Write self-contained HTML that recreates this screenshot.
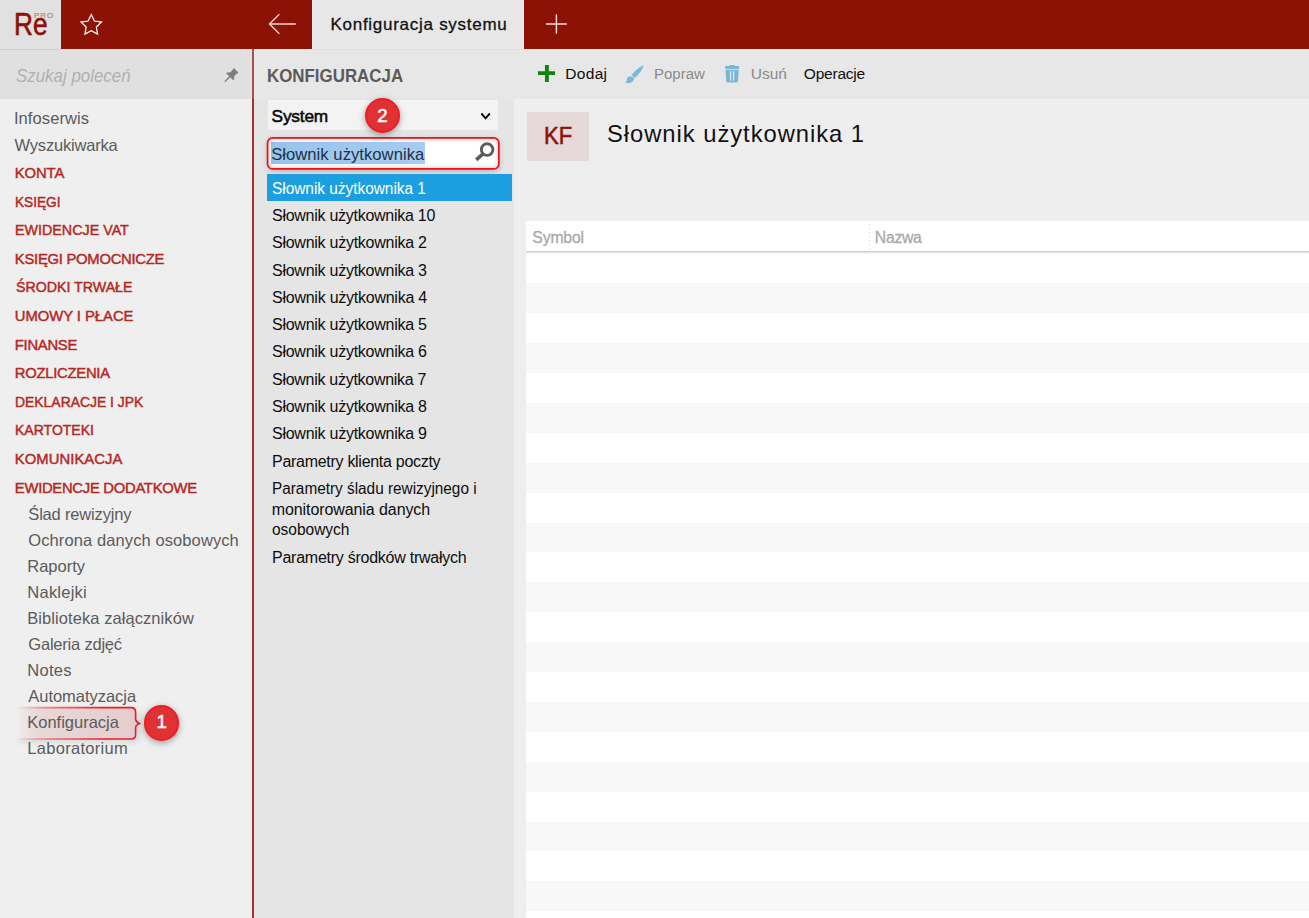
<!DOCTYPE html>
<html lang="pl">
<head>
<meta charset="utf-8">
<title>Konfiguracja systemu</title>
<style>
html,body{margin:0;padding:0;}
body{width:1309px;height:918px;overflow:hidden;position:relative;background:#eeeeee;font-family:"Liberation Sans",sans-serif;}
.a{position:absolute;}
.t{position:absolute;line-height:0;height:0;white-space:pre;transform-origin:0 50%;margin-top:-0.3465em;}
svg{position:absolute;overflow:visible;}
/* regions */
#topbar{left:0;top:0;width:1309px;height:49px;background:#8c1206;}
#topline{left:0;top:49px;width:61px;height:1px;background:#dccaca;}
#topline2{left:312px;top:49px;width:212px;height:1px;background:#e3dcda;}
#logo{left:0;top:0;width:61px;height:49px;background:#e1e1e1;}
#tab{left:312px;top:0;width:212px;height:49px;background:#e7e7e7;}
#side{left:0;top:49px;width:252px;height:869px;background:#efefef;}
#sidesearch{left:0;top:49px;width:252px;height:50px;background:#e0e0e0;}
#vline{left:252px;top:49px;width:2px;height:50px;background:#a9524a;}
#vline2{left:252px;top:99px;width:2px;height:820px;background:#a1352b;}
#mid{left:254px;top:49px;width:259.6px;height:869px;background:#e5e5e5;}
#midhead{left:254px;top:49px;width:259.6px;height:50px;background:#e7e7e7;}
#toolbar{left:513px;top:49px;width:796px;height:49.6px;background:#e7e7e7;}
#select{left:268px;top:100.3px;width:230px;height:29.6px;background:#f3f3f3;}
#search{left:267.5px;top:137.9px;width:231.4px;height:31.1px;border-radius:5px;background:#fff;box-shadow:0 2px 6px rgba(0,0,0,.24);}
#searchglow{left:267.5px;top:137.9px;width:231.4px;height:31.1px;border-radius:5px;box-shadow:inset 0 0 5px 1px rgba(0,0,0,.22);}
#sel{left:270.7px;top:142.4px;width:154.3px;height:21.4px;background:linear-gradient(90deg,#98c3ea,#a6cdf0);}
#active{left:266.5px;top:174.4px;width:245.5px;height:26.8px;background:#1c9fe0;}
#kf{left:526.9px;top:111.9px;width:61.9px;height:48.9px;background:#e6d9d9;}
#thead{left:526px;top:221.2px;width:783px;height:30px;background:#fff;}
#theadline{left:526px;top:251.2px;width:783px;height:2.2px;background:linear-gradient(180deg,#c9c9c9 0,#d4d4d4 45%,#efefef 100%);}
#colsep{left:869px;top:224px;width:1px;height:26px;background:repeating-linear-gradient(180deg,#d6d6d6 0,#d6d6d6 1px,transparent 1px,transparent 4px);}
#rows{left:526px;top:253px;width:783px;height:665px;background:repeating-linear-gradient(180deg,#f8f8f8 0,#f8f8f8 0.5px,#fff 0.5px,#fff 30.4px,#f8f8f8 30.4px,#f8f8f8 59.8px);}
#rowgap{left:526px;top:252px;width:783px;height:1.4px;background:#f4f4f4;}
.badge{width:31.5px;height:31.5px;border-radius:50%;background:#e03135;border:2px solid #f01c24;box-shadow:0 2px 6px rgba(0,0,0,.35);}
#b1{left:143.5px;top:705px;}
#b2{left:364.8px;top:97.5px;}
#cfg{left:16px;top:707.6px;width:119.6px;height:31.4px;background:linear-gradient(90deg,rgba(225,190,190,0) 0,rgba(228,200,200,.6) 18%,rgba(226,196,196,.8) 100%);border-radius:0 6px 6px 0;box-shadow:4px 3px 6px rgba(0,0,0,.10);}
</style>
</head>
<body>
<div class="a" id="topbar"></div>

<div class="a" id="logo"></div>
<div class="a" id="tab"></div>
<div class="a" id="side"></div>
<div class="a" id="sidesearch"></div>
<div class="a" id="mid"></div>
<div class="a" id="midhead"></div>
<div class="a" id="toolbar"></div>
<div class="a" id="vline"></div>
<div class="a" id="vline2"></div>
<div class="a" id="topline"></div>
<div class="a" id="topline2"></div>
<div class="a" id="select"></div>
<div class="a" id="search"></div>
<div class="a" id="sel"></div>
<div class="a" id="searchglow"></div>
<div class="a" id="active"></div>
<div class="a" id="kf"></div>
<div class="a" id="rows"></div>
<div class="a" id="thead"></div>
<div class="a" id="theadline"></div>
<div class="a" id="colsep"></div>
<div class="a" id="cfg"></div>

<!-- icons -->
<svg id="icons" width="1309" height="918" style="left:0;top:0" viewBox="0 0 1309 918">
  <!-- star -->
  <path d="M91.25 14.60 L94.39 21.02 L101.47 22.03 L96.34 27.00 L97.57 34.05 L91.25 30.70 L84.93 34.05 L86.16 27.00 L81.03 22.03 L88.11 21.02 Z" fill="none" stroke="#fff" stroke-width="1.25" stroke-linejoin="miter"/>
  <!-- back arrow -->
  <path d="M295.8 24 H269.6 M279.3 14.3 L269.5 24 L279.3 33.8" fill="none" stroke="#f3d4d1" stroke-width="1.4"/>
  <!-- plus tab -->
  <path d="M546 24 H566.8 M556.4 14.3 V33.8" fill="none" stroke="#f3dedb" stroke-width="1.4"/>
  <!-- pin -->
  <g transform="translate(231.3,75.2) rotate(45)" fill="#7e7e7e" stroke="none">
    <path d="M-3.3 -6.9 H3.3 C2.9 -5 2.6 -3.5 2.7 -1.6 C3.4 -0.6 4.4 0.3 4.9 1.0 V2.3 H-4.9 V1.0 C-4.4 0.3 -3.4 -0.6 -2.7 -1.6 C-2.6 -3.5 -2.9 -5 -3.3 -6.9 Z"/>
    <path d="M-0.85 2.3 H0.85 L0.5 9.4 H-0.5 Z"/>
  </g>
  <!-- search callout border -->
  <rect x="267.55" y="137.95" width="231.3" height="31" rx="5" ry="5" fill="none" stroke="#f40f16" stroke-width="1.7"/>
  <!-- chevron -->
  <path d="M481.4 113.5 L485.6 118.3 L489.8 113.5" fill="none" stroke="#0a0a0a" stroke-width="1.9"/>
  <!-- magnifier -->
  <circle cx="487.1" cy="149.6" r="5.8" fill="none" stroke="#5c5c5c" stroke-width="2.9"/>
  <path d="M483.0 153.9 L476.2 159.9" fill="none" stroke="#5c5c5c" stroke-width="3.5" stroke-linecap="butt"/>
  <!-- green plus -->
  <path d="M538 73.15 H555 M546.9 65 V82" fill="none" stroke="#0f840f" stroke-width="3.9"/>
  <!-- brush -->
  <g fill="#7db9d8">
    <path d="M643.8 65.2 C640 66.4 634.5 70.8 631.6 75.2 L634.8 78 C638.6 74.6 642.6 69.4 643.8 65.2 Z"/>
    <path d="M630.6 76.2 C628.2 76.2 626.8 77.8 626.8 79.8 C626.8 81.4 626 82.2 625.2 82.6 C627.6 83.6 631.4 83.2 633.2 81 C634.4 79.6 634.2 78.2 633.6 77.4 Z"/>
  </g>
  <!-- trash -->
  <g fill="#7ab7d7">
    <rect x="729.4" y="64.9" width="5.6" height="2" rx="0.7"/>
    <rect x="725" y="66" width="14.2" height="2.9" rx="0.8"/>
    <path d="M725.5 69.8 H738.7 L738 81.2 Q737.9 82.5 736.6 82.5 H727.6 Q726.3 82.5 726.2 81.2 Z M729.9 71.2 L730.1 80.8 H731.2 L731.2 71.2 Z M733.0 71.2 L733.0 80.8 H734.1 L734.3 71.2 Z" fill-rule="evenodd"/>
  </g>
  <!-- callout bracket for Konfiguracja -->
  <defs>
    <linearGradient id="fade" x1="0" x2="1" y1="0" y2="0">
      <stop offset="0" stop-color="#ee2a35" stop-opacity="0"/>
      <stop offset="0.25" stop-color="#ee2a35" stop-opacity="0.55"/>
      <stop offset="0.7" stop-color="#ec1c28" stop-opacity="1"/>
    </linearGradient>
  </defs>
  <path d="M16.3 707.6 H131 Q135.6 707.6 135.6 712.2 V719 Q135.6 721.8 139.4 723.4 Q135.6 725 135.6 727.8 V734.4 Q135.6 739 131 739 H16.3" fill="none" stroke="url(#fade)" stroke-width="1.6" gradientUnits="userSpaceOnUse"/>
</svg>
<div class="a badge" id="b1"></div>
<div class="a badge" id="b2"></div>

<!-- texts -->
<span class="t" style="left:330.50px;top:30.60px;font-size:17.0px;color:#111;letter-spacing:0.723px;-webkit-text-stroke:0.3px #111;">Konfiguracja systemu</span>
<span class="t" style="left:15.90px;top:81.80px;font-size:17.6px;color:#B0B0B0;transform:scaleX(0.9603);font-style:italic;">Szukaj poleceń</span>
<span class="t" style="left:13.90px;top:123.80px;font-size:16.5px;color:#5b5b5b;letter-spacing:0.097px;">Infoserwis</span>
<span class="t" style="left:14.50px;top:150.60px;font-size:16.5px;color:#5b5b5b;letter-spacing:-0.183px;">Wyszukiwarka</span>
<span class="t" style="left:14.85px;top:178.00px;font-size:14.8px;color:#B5281F;letter-spacing:-0.101px;-webkit-text-stroke:0.45px #B5281F;">KONTA</span>
<span class="t" style="left:14.89px;top:207.60px;font-size:14.8px;color:#B5281F;transform:scaleX(0.9225);-webkit-text-stroke:0.45px #B5281F;">KSIĘGI</span>
<span class="t" style="left:14.87px;top:235.20px;font-size:14.8px;color:#B5281F;transform:scaleX(0.9661);-webkit-text-stroke:0.45px #B5281F;">EWIDENCJE VAT</span>
<span class="t" style="left:14.85px;top:263.80px;font-size:14.8px;color:#B5281F;letter-spacing:-0.261px;-webkit-text-stroke:0.45px #B5281F;">KSIĘGI POMOCNICZE</span>
<span class="t" style="left:15.83px;top:292.40px;font-size:14.8px;color:#B5281F;transform:scaleX(0.9591);-webkit-text-stroke:0.45px #B5281F;">ŚRODKI TRWAŁE</span>
<span class="t" style="left:14.85px;top:321.00px;font-size:14.8px;color:#B5281F;letter-spacing:-0.029px;-webkit-text-stroke:0.45px #B5281F;">UMOWY I PŁACE</span>
<span class="t" style="left:14.85px;top:350.60px;font-size:14.8px;color:#B5281F;letter-spacing:-0.277px;-webkit-text-stroke:0.45px #B5281F;">FINANSE</span>
<span class="t" style="left:14.85px;top:378.20px;font-size:14.8px;color:#B5281F;letter-spacing:-0.266px;-webkit-text-stroke:0.45px #B5281F;">ROZLICZENIA</span>
<span class="t" style="left:14.88px;top:406.80px;font-size:14.8px;color:#B5281F;transform:scaleX(0.9404);-webkit-text-stroke:0.45px #B5281F;">DEKLARACJE I JPK</span>
<span class="t" style="left:14.88px;top:435.40px;font-size:14.8px;color:#B5281F;transform:scaleX(0.9474);-webkit-text-stroke:0.45px #B5281F;">KARTOTEKI</span>
<span class="t" style="left:14.85px;top:464.00px;font-size:14.8px;color:#B5281F;letter-spacing:0.059px;-webkit-text-stroke:0.45px #B5281F;">KOMUNIKACJA</span>
<span class="t" style="left:14.85px;top:493.60px;font-size:14.8px;color:#B5281F;letter-spacing:-0.277px;-webkit-text-stroke:0.45px #B5281F;">EWIDENCJE DODATKOWE</span>
<span class="t" style="left:28.30px;top:520.10px;font-size:16.5px;color:#5b5b5b;letter-spacing:-0.177px;">Ślad rewizyjny</span>
<span class="t" style="left:28.30px;top:546.10px;font-size:16.5px;color:#5b5b5b;letter-spacing:0.099px;">Ochrona danych osobowych</span>
<span class="t" style="left:27.30px;top:572.10px;font-size:16.5px;color:#5b5b5b;letter-spacing:-0.021px;">Raporty</span>
<span class="t" style="left:27.30px;top:598.10px;font-size:16.5px;color:#5b5b5b;letter-spacing:0.243px;">Naklejki</span>
<span class="t" style="left:27.30px;top:624.10px;font-size:16.5px;color:#5b5b5b;letter-spacing:0.068px;">Biblioteka załączników</span>
<span class="t" style="left:28.30px;top:650.10px;font-size:16.5px;color:#5b5b5b;letter-spacing:-0.212px;">Galeria zdjęć</span>
<span class="t" style="left:27.30px;top:676.10px;font-size:16.5px;color:#5b5b5b;letter-spacing:0.262px;">Notes</span>
<span class="t" style="left:28.30px;top:702.10px;font-size:16.5px;color:#5b5b5b;letter-spacing:-0.037px;">Automatyzacja</span>
<span class="t" style="left:27.30px;top:728.10px;font-size:16.5px;color:#5b5b5b;letter-spacing:-0.013px;">Konfiguracja</span>
<span class="t" style="left:27.30px;top:754.10px;font-size:16.5px;color:#5b5b5b;letter-spacing:0.293px;">Laboratorium</span>
<span class="t" style="left:267.05px;top:82.10px;font-size:17.8px;color:#5a5a5a;transform:scaleX(0.9501);font-weight:700;">KONFIGURACJA</span>
<span class="t" style="left:271.55px;top:121.80px;font-size:17.3px;color:#0a0a0a;letter-spacing:-0.184px;-webkit-text-stroke:0.55px #0a0a0a;">System</span>
<span class="t" style="left:271.20px;top:161.00px;font-size:16.6px;color:#1f2f48;letter-spacing:0.048px;">Słownik użytkownika</span>
<span class="t" style="left:272.00px;top:194.70px;font-size:16.0px;color:#fff;transform:scaleX(0.9615);">Słownik użytkownika 1</span>
<span class="t" style="left:272.00px;top:221.97px;font-size:16.0px;color:#0d0d0d;letter-spacing:-0.270px;">Słownik użytkownika 10</span>
<span class="t" style="left:272.00px;top:248.24px;font-size:16.0px;color:#0d0d0d;letter-spacing:-0.259px;">Słownik użytkownika 2</span>
<span class="t" style="left:272.00px;top:276.51px;font-size:16.0px;color:#0d0d0d;letter-spacing:-0.259px;">Słownik użytkownika 3</span>
<span class="t" style="left:272.00px;top:303.78px;font-size:16.0px;color:#0d0d0d;letter-spacing:-0.244px;">Słownik użytkownika 4</span>
<span class="t" style="left:272.00px;top:330.05px;font-size:16.0px;color:#0d0d0d;letter-spacing:-0.259px;">Słownik użytkownika 5</span>
<span class="t" style="left:272.00px;top:357.32px;font-size:16.0px;color:#0d0d0d;letter-spacing:-0.259px;">Słownik użytkownika 6</span>
<span class="t" style="left:272.00px;top:385.59px;font-size:16.0px;color:#0d0d0d;letter-spacing:-0.279px;">Słownik użytkownika 7</span>
<span class="t" style="left:272.00px;top:412.86px;font-size:16.0px;color:#0d0d0d;letter-spacing:-0.259px;">Słownik użytkownika 8</span>
<span class="t" style="left:272.00px;top:439.13px;font-size:16.0px;color:#0d0d0d;letter-spacing:-0.259px;">Słownik użytkownika 9</span>
<span class="t" style="left:272.00px;top:468.00px;font-size:16.0px;color:#0d0d0d;letter-spacing:-0.286px;">Parametry klienta poczty</span>
<span class="t" style="left:272.04px;top:495.00px;font-size:16.0px;color:#0d0d0d;transform:scaleX(0.9586);">Parametry śladu rewizyjnego i</span>
<span class="t" style="left:271.70px;top:516.00px;font-size:16.0px;color:#0d0d0d;letter-spacing:-0.084px;">monitorowania danych</span>
<span class="t" style="left:272.40px;top:536.00px;font-size:16.0px;color:#0d0d0d;transform:scaleX(0.9678);">osobowych</span>
<span class="t" style="left:272.00px;top:564.00px;font-size:16.0px;color:#0d0d0d;letter-spacing:-0.250px;">Parametry środków trwałych</span>
<span class="t" style="left:565.20px;top:78.90px;font-size:15.5px;color:#0d0d0d;letter-spacing:0.336px;">Dodaj</span>
<span class="t" style="left:653.63px;top:78.90px;font-size:15.5px;color:#8a8a8a;transform:scaleX(0.9664);">Popraw</span>
<span class="t" style="left:750.80px;top:78.90px;font-size:15.5px;color:#8a8a8a;letter-spacing:-0.055px;">Usuń</span>
<span class="t" style="left:803.80px;top:78.90px;font-size:15.5px;color:#111;letter-spacing:-0.210px;">Operacje</span>
<span class="t" style="left:543.79px;top:144.40px;font-size:24px;color:#8C1106;transform:scaleX(0.9200);-webkit-text-stroke:0.55px #8C1106;">KF</span>
<span class="t" style="left:607.00px;top:142.50px;font-size:23.8px;color:#111;letter-spacing:0.948px;">Słownik użytkownika 1</span>
<span class="t" style="left:532.30px;top:243.80px;font-size:15.8px;color:#a9a9a9;letter-spacing:-0.173px;-webkit-text-stroke:0.3px #a9a9a9;">Symbol</span>
<span class="t" style="left:874.80px;top:243.00px;font-size:15.8px;color:#a9a9a9;letter-spacing:-0.300px;-webkit-text-stroke:0.3px #a9a9a9;">Nazwa</span>
<span class="t" style="left:14.22px;top:35.60px;font-size:31px;color:#8C1106;transform:scaleX(0.8460);-webkit-text-stroke:0.6px #8C1106;">Re</span>
<span class="t" style="left:34.10px;top:18.70px;font-size:8.0px;color:#c47d78;letter-spacing:0.893px;-webkit-text-stroke:0.2px #c47d78;">PRO</span>
<span class="t" style="left:156.60px;top:728.30px;font-size:18.6px;color:#fff;-webkit-text-stroke:0.5px #fff;">1</span>
<span class="t" style="left:377.20px;top:122.30px;font-size:18.6px;color:#fff;-webkit-text-stroke:0.5px #fff;">2</span>
</body>
</html>
